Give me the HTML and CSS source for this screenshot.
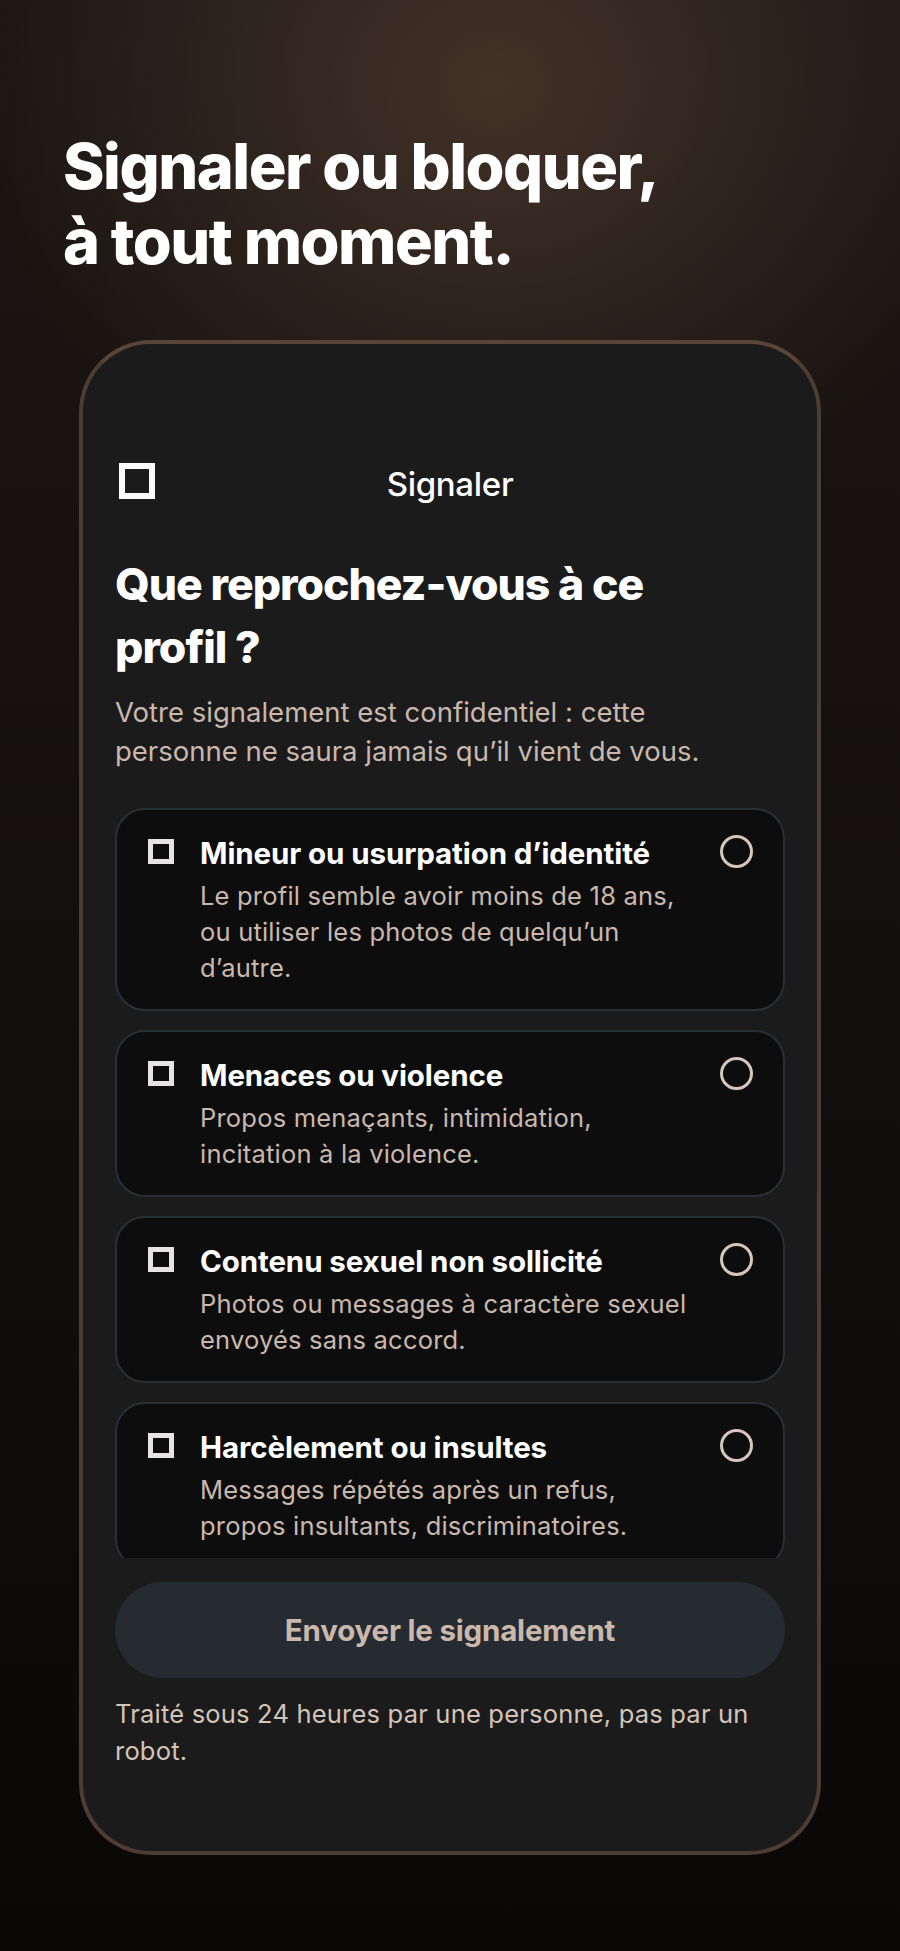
FILE: index.html
```html
<!DOCTYPE html>
<html lang="fr">
<head>
    <meta charset="UTF-8">
    <meta name="viewport" content="width=device-width, initial-scale=1.0">
    <title>Signaler ou bloquer</title>
    <link rel="stylesheet" href="styles.css">
</head>
<body>
    <h1 class="hero">Signaler ou bloquer,<br>à tout moment.</h1>

    <div class="phone">
        <div class="topbar">
            <div class="back-icon"></div>
            <div class="topbar-title">Signaler</div>
            <div></div>
        </div>

        <h2 class="question">Que reprochez-vous à ce profil ?</h2>
        <p class="lead">Votre signalement est confidentiel : cette personne ne saura jamais qu’il vient de vous.</p>

        <div class="reasons">
            <div class="reason">
                <div class="box"></div>
                <div class="reason-text">
                    <div class="reason-title">Mineur ou usurpation d’identité</div>
                    <div class="reason-desc">Le profil semble avoir moins de 18 ans, ou utiliser les photos de quelqu’un d’autre.</div>
                </div>
                <div class="radio"></div>
            </div>
            <div class="reason">
                <div class="box"></div>
                <div class="reason-text">
                    <div class="reason-title">Menaces ou violence</div>
                    <div class="reason-desc">Propos menaçants, intimidation, incitation à la violence.</div>
                </div>
                <div class="radio"></div>
            </div>
            <div class="reason">
                <div class="box"></div>
                <div class="reason-text">
                    <div class="reason-title">Contenu sexuel non sollicité</div>
                    <div class="reason-desc">Photos ou messages à caractère sexuel envoyés sans accord.</div>
                </div>
                <div class="radio"></div>
            </div>
            <div class="reason">
                <div class="box"></div>
                <div class="reason-text">
                    <div class="reason-title">Harcèlement ou insultes</div>
                    <div class="reason-desc">Messages répétés après un refus,<br>propos insultants, discriminatoires.</div>
                </div>
                <div class="radio"></div>
            </div>
        </div>

        <button class="send">Envoyer le signalement</button>
        <p class="note">Traité sous 24 heures par une personne, pas par un robot.</p>
    </div>
</body>
</html>
```

FILE: styles.css
```css
body {
    margin: 0;
    width: 900px;
    height: 1951px;
    overflow: hidden;
    font-family: Inter, "Noto Sans", sans-serif;
    background:
        radial-gradient(ellipse 520px 460px at 495px 85px, rgba(70, 53, 42, 0.9), rgba(70, 53, 42, 0) 100%),
        linear-gradient(180deg, #1c1613 0%, #14100e 45%, #0a0807 100%);
    color: #fff;
}
.hero {
    margin: 0;
    padding: 129px 0 0 63px;
    font-weight: 800;
    font-size: 63px;
    line-height: 75px;
    letter-spacing: -1.5px;
    color: #fff;
}
.phone {
    box-sizing: border-box;
    margin: 61px 79px 0;
    height: 1515px;
    border: 4px solid #4d3c31;
    border-top-color: #594538;
    border-radius: 72px;
    background-color: #1b1b1b;
    padding: 119px 32px 0;
    overflow: hidden;
}
.topbar {
    display: grid;
    grid-template-columns: 36px 1fr 36px;
    align-items: start;
    height: 36px;
    padding-left: 4px;
}
.back-icon {
    box-sizing: border-box;
    width: 36px;
    height: 36px;
    border: 6px solid #fafafa;
}
.topbar-title {
    padding: 3px 4px 0 0;
    text-align: center;
    font-weight: 500;
    font-size: 33px;
    line-height: 36px;
    letter-spacing: -0.3px;
    color: #fff;
}
.question {
    margin: 54px 0 0;
    width: 570px;
    font-weight: 800;
    font-size: 44.5px;
    line-height: 63px;
    letter-spacing: -1px;
    color: #fff;
}
.lead {
    margin: 14px 0 0;
    width: 610px;
    font-size: 27.5px;
    line-height: 39px;
    color: #c8b8ad;
}
.reasons {
    margin-top: 37px;
    height: 750px;
    overflow: hidden;
    display: flex;
    flex-direction: column;
    gap: 19px;
}
.reason {
    flex-shrink: 0;
    display: grid;
    grid-template-columns: 26px 1fr 33px;
    column-gap: 26px;
    align-items: start;
    padding: 25px 30px 23px 31px;
    border: 2px solid #2a2f35;
    border-radius: 30px;
    background-color: #0d0d0d;
}
.box {
    box-sizing: border-box;
    width: 26px;
    height: 25px;
    margin-top: 4px;
    border: 5px solid #e6e3e5;
}
.reason-title {
    font-weight: 700;
    font-size: 29.5px;
    line-height: 36px;
    letter-spacing: -0.1px;
    color: #fff;
}
.reason-desc {
    margin-top: 7px;
    font-size: 25.5px;
    line-height: 36px;
    letter-spacing: 0.2px;
    color: #c9b8ad;
}
.radio {
    box-sizing: border-box;
    width: 33px;
    height: 33px;
    border: 3px solid #d6c6bb;
    border-radius: 50%;
}
.send {
    display: block;
    width: 100%;
    height: 96px;
    margin-top: 24px;
    border: none;
    border-radius: 48px;
    background-color: #252b31;
    font-family: Inter, sans-serif;
    font-weight: 700;
    font-size: 29.5px;
    letter-spacing: -0.2px;
    color: #cbb8ac;
}
.note {
    margin: 17px 0 0;
    font-size: 25.5px;
    line-height: 37px;
    letter-spacing: 0.2px;
    color: #d3c4ba;
}
```
